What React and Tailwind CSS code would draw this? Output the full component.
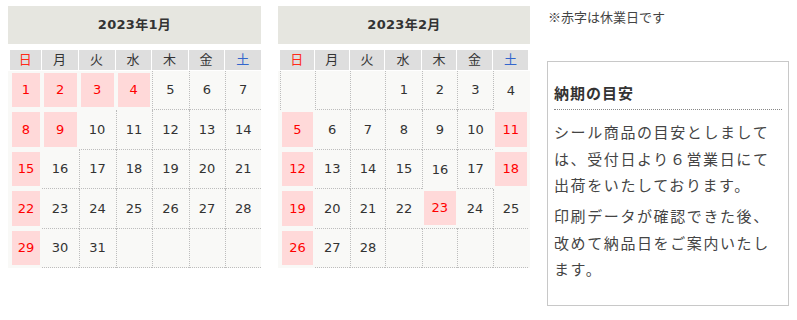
import React from "react";

const WEEK = ["日", "月", "火", "水", "木", "金", "土"];

const months = [
  {
    title: "2023年1月",
    wrap: "w-[253px]",
    cols: "grid-cols-[31.5px_37px_37px_36px_37px_36px_36.5px]",
    rows: [
      [1, 2, 3, 4, 5, 6, 7],
      [8, 9, 10, 11, 12, 13, 14],
      [15, 16, 17, 18, 19, 20, 21],
      [22, 23, 24, 25, 26, 27, 28],
      [29, 30, 31, null, null, null, null],
    ],
    holidays: [1, 2, 3, 4, 8, 9, 15, 22, 29],
    forceLeft: ["0-4"],
    forceBottom: [],
  },
  {
    title: "2023年2月",
    wrap: "w-[252px]",
    cols: "grid-cols-[34.5px_35.5px_35px_37px_35px_36px_35px]",
    rows: [
      [null, null, null, 1, 2, 3, 4],
      [5, 6, 7, 8, 9, 10, 11],
      [12, 13, 14, 15, 16, 17, 18],
      [19, 20, 21, 22, 23, 24, 25],
      [26, 27, 28, null, null, null, null],
    ],
    holidays: [5, 11, 12, 18, 19, 23, 26],
    forceLeft: [],
    forceBottom: ["3-4"],
  },
];

function Calendar({ m }) {
  const isH = (r, c) => {
    const row = m.rows[r];
    if (!row) return false;
    const v = row[c];
    return v != null && m.holidays.includes(v);
  };
  const last = m.rows.length - 1;
  return (
    <div className={`${m.wrap} flex flex-col`}>
      <div className="h-[38px] bg-[#e6e6e0] flex items-center justify-center text-[13px] font-bold text-[#333] tracking-[0.3px]">
        {m.title}
      </div>
      <div className={`mt-[6px] ml-[2px] grid ${m.cols} h-[21px] border-b border-white`}>
        {WEEK.map((w, i) => (
          <div
            key={w}
            className={`bg-[#dedede] flex items-center justify-center text-[13px] ${
              i < 6 ? "border-r border-white" : ""
            } ${i === 0 ? "text-[#ff2a1a]" : i === 6 ? "text-[#3366cc]" : "text-[#333]"}`}
          >
            {w}
          </div>
        ))}
      </div>
      <div className="bg-[#f9f9f7] pl-[2px]">
        <div className={`grid ${m.cols} auto-rows-[39.4px]`}>
          {m.rows.map((row, r) =>
            row.map((d, c) => {
              const h = isH(r, c);
              const key = `${r}-${c}`;
              let left = c === 0 ? !h : !h && !isH(r, c - 1);
              if (m.forceLeft.includes(key)) left = true;
              let bottom = r === last ? !h : !h && !isH(r + 1, c);
              if (m.forceBottom.includes(key)) bottom = true;
              const borders = `${left ? "border-l" : ""} ${bottom ? "border-b" : ""} border-dotted border-[#bdbdbd]`;
              if (h) {
                return (
                  <div key={key} className={`flex pt-[2px] pl-[2px] pr-[1.5px] pb-[3px] ${borders}`}>
                    <div className="flex-1 bg-[#ffd9d9] flex items-center justify-center text-[13px] text-[#ff0000]">
                      {d}
                    </div>
                  </div>
                );
              }
              return (
                <div key={key} className={`flex items-center justify-center text-[13px] text-[#333] ${borders}`}>
                  {d}
                </div>
              );
            })
          )}
        </div>
      </div>
    </div>
  );
}

export default function App() {
  return (
    <div
      className="w-[797px] h-[320px] bg-white flex items-start gap-[17px] pt-[6px] pl-[8px]"
      style={{ fontFamily: '"DejaVu Sans", "Noto Sans CJK JP", sans-serif' }}
    >
      {months.map((m) => (
        <Calendar key={m.title} m={m} />
      ))}
      <div className="w-[242px] flex flex-col" style={{ fontFamily: '"Noto Sans CJK JP", sans-serif' }}>
        <p className="text-[13px] leading-[22px] text-[#444] pl-[1px]">※赤字は休業日です</p>
        <div className="mt-[33px] border border-[#c8c8c8] h-[245px] px-[6px] pt-[19px]">
          <h3 className="text-[15px] font-bold text-[#333] leading-[24px] tracking-[1px] pb-[4px] border-b border-dotted border-[#888]">
            納期の目安
          </h3>
          <p className="mt-[9px] text-[15px] leading-[26.5px] tracking-[1.6px] text-[#444] whitespace-nowrap">
            シール商品の目安としまして
            <br />
            は、受付日より６営業日にて
            <br />
            出荷をいたしております。
          </p>
          <p className="mt-[4.5px] text-[15px] leading-[26.5px] tracking-[1.6px] text-[#444] whitespace-nowrap">
            印刷データが確認できた後、
            <br />
            改めて納品日をご案内いたし
            <br />
            ます。
          </p>
        </div>
      </div>
    </div>
  );
}
